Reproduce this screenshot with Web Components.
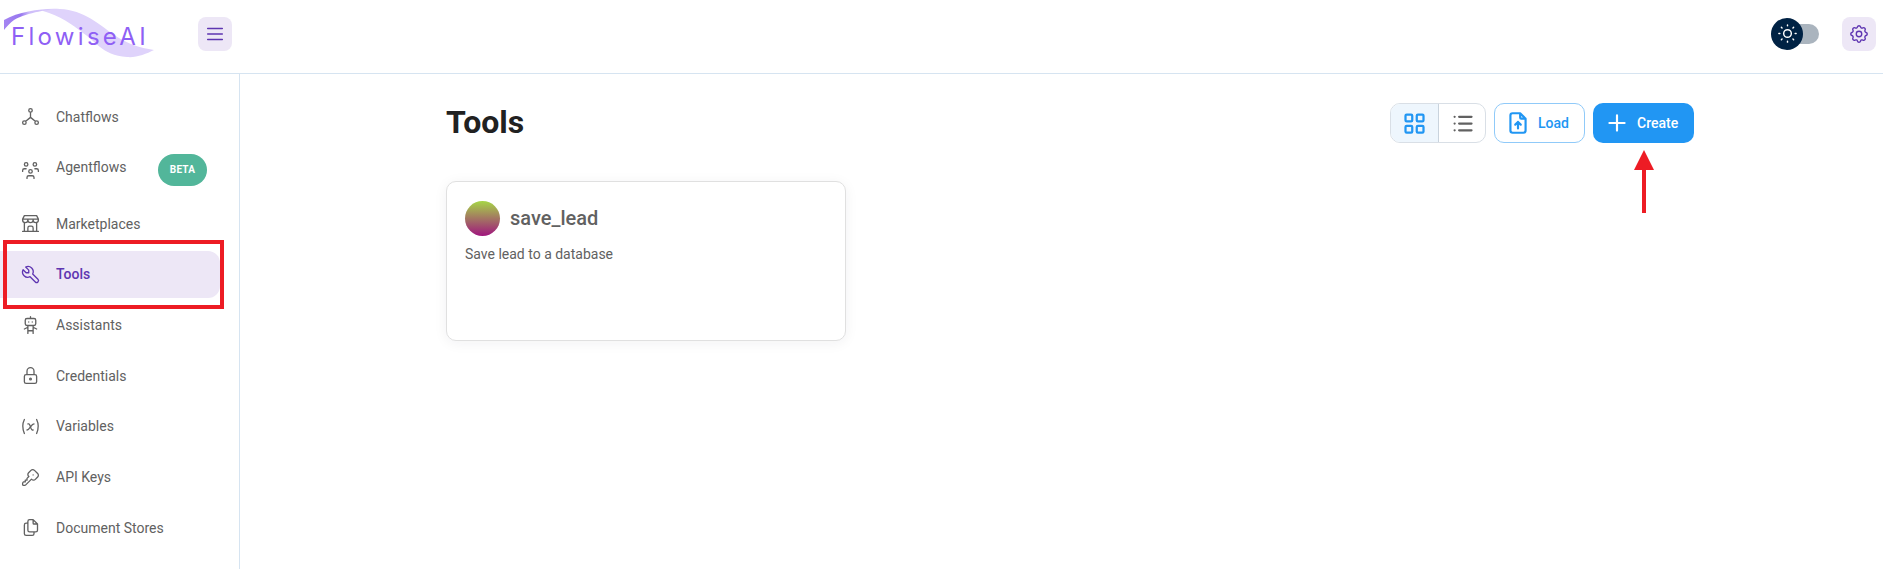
<!DOCTYPE html>
<html lang="en"><head><meta charset="utf-8"><title>Tools</title>
<style>
html,body{margin:0;padding:0;height:569px;overflow:hidden;background:#fff;font-family:Roboto,"Liberation Sans",sans-serif}
</style></head>
<body>
<fw-app></fw-app>
<script>
const ICONS={
hierarchy:'M12 5m-2 0a2 2 0 1 0 4 0a2 2 0 1 0 -4 0M5 19m-2 0a2 2 0 1 0 4 0a2 2 0 1 0 -4 0M19 19m-2 0a2 2 0 1 0 4 0a2 2 0 1 0 -4 0M6.5 17.5l5.5 -4.5l5.5 4.5M12 7l0 6',
users:'M10 13a2 2 0 1 0 4 0a2 2 0 0 0 -4 0M8 21v-1a2 2 0 0 1 2 -2h4a2 2 0 0 1 2 2v1M15 5a2 2 0 1 0 4 0a2 2 0 0 0 -4 0M17 10h2a2 2 0 0 1 2 2v1M5 5a2 2 0 1 0 4 0a2 2 0 0 0 -4 0M3 13v-1a2 2 0 0 1 2 -2h2',
store:'M3 21l18 0M3 7v1a3 3 0 0 0 6 0v-1m0 1a3 3 0 0 0 6 0v-1m0 1a3 3 0 0 0 6 0v-1h-18l2 -4h14l2 4M5 21l0 -10.15M19 21l0 -10.15M9 21v-4a2 2 0 0 1 2 -2h2a2 2 0 0 1 2 2v4',
tool:'M7 10h3v-3l-3.5 -3.5a6 6 0 0 1 8 8l6 6a2 2 0 0 1 -3 3l-6 -6a6 6 0 0 1 -8 -8l3.5 3.5',
robot:'M6 4m0 2a2 2 0 0 1 2 -2h8a2 2 0 0 1 2 2v4a2 2 0 0 1 -2 2h-8a2 2 0 0 1 -2 -2zM12 2v2M9 12v9M15 12v9M5 16l4 -2M15 14l4 2M9 18h6M10 8v.01M14 8v.01',
lock:'M5 13a2 2 0 0 1 2 -2h10a2 2 0 0 1 2 2v6a2 2 0 0 1 -2 2h-10a2 2 0 0 1 -2 -2v-6zM11 16a1 1 0 1 0 2 0a1 1 0 0 0 -2 0M8 11v-4a4 4 0 1 1 8 0v4',
variable:'M5 4c-2.5 5 -2.5 10 0 16m14 -16c2.5 5 2.5 10 0 16m-10 -11h1c1 0 1 1 2.016 3.527c.984 2.473 .984 3.473 1.984 3.473h1M8 16c1.5 0 3 -2 4 -3.5s2.5 -3.5 4 -3.5',
key:'M16.555 3.843l3.602 3.602a2.877 2.877 0 0 1 0 4.069l-2.643 2.643a2.877 2.877 0 0 1 -4.069 0l-.301 -.301l-6.558 6.558a2 2 0 0 1 -1.239 .578l-.175 .008h-1.172a1 1 0 0 1 -.993 -.883l-.007 -.117v-1.172a2 2 0 0 1 .467 -1.284l.119 -.13l.414 -.414h2v-2h2v-2l2.144 -2.144l-.301 -.301a2.877 2.877 0 0 1 0 -4.069l2.643 -2.643a2.877 2.877 0 0 1 4.069 0zM15 9h.01',
files:'M15 3v4a1 1 0 0 0 1 1h4M18 17h-7a2 2 0 0 1 -2 -2v-10a2 2 0 0 1 2 -2h4l5 5v7a2 2 0 0 1 -2 2zM16 17v2a2 2 0 0 1 -2 2h-7a2 2 0 0 1 -2 -2v-10a2 2 0 0 1 2 -2h2',
menu:'M4 6l16 0M4 12l16 0M4 18l16 0',
sun:'M12 12m-4 0a4 4 0 1 0 8 0a4 4 0 1 0 -8 0M3 12h1m8 -9v1m8 8h1m-9 8v1m-6.4 -15.4l.7 .7m12.1 -.7l-.7 .7m0 11.4l.7 .7m-12.1 -.7l-.7 .7',
settings:'M10.325 4.317c.426 -1.756 2.924 -1.756 3.35 0a1.724 1.724 0 0 0 2.573 1.066c1.543 -.94 3.31 .826 2.37 2.37a1.724 1.724 0 0 0 1.065 2.572c1.756 .426 1.756 2.924 0 3.35a1.724 1.724 0 0 0 -1.066 2.573c.94 1.543 -.826 3.31 -2.37 2.37a1.724 1.724 0 0 0 -2.572 1.065c-.426 1.756 -2.924 1.756 -3.35 0a1.724 1.724 0 0 0 -2.573 -1.066c-1.543 .94 -3.31 -.826 -2.37 -2.37a1.724 1.724 0 0 0 -1.065 -2.572c-1.756 -.426 -1.756 -2.924 0 -3.35a1.724 1.724 0 0 0 1.066 -2.573c-.94 -1.543 .826 -3.31 2.37 -2.37c1 .608 2.296 .07 2.572 -1.065zM9 12a3 3 0 1 0 6 0a3 3 0 0 0 -6 0',
grid:'M4 4m0 1a1 1 0 0 1 1 -1h4a1 1 0 0 1 1 1v4a1 1 0 0 1 -1 1h-4a1 1 0 0 1 -1 -1zM14 4m0 1a1 1 0 0 1 1 -1h4a1 1 0 0 1 1 1v4a1 1 0 0 1 -1 1h-4a1 1 0 0 1 -1 -1zM4 14m0 1a1 1 0 0 1 1 -1h4a1 1 0 0 1 1 1v4a1 1 0 0 1 -1 1h-4a1 1 0 0 1 -1 -1zM14 14m0 1a1 1 0 0 1 1 -1h4a1 1 0 0 1 1 1v4a1 1 0 0 1 -1 1h-4a1 1 0 0 1 -1 -1z',
list:'M9 6l11 0M9 12l11 0M9 18l11 0M5 6l0 .01M5 12l0 .01M5 18l0 .01',
upload:'M14 3v4a1 1 0 0 0 1 1h4M17 21h-10a2 2 0 0 1 -2 -2v-14a2 2 0 0 1 2 -2h7l5 5v11a2 2 0 0 1 -2 2zM12 11v6M9.500 13.500l2.500 -2.500l2.500 2.500',
plus:'M12 5l0 14M5 12l14 0'
};
function def(name,html,extra){
  const t=document.createElement('template');t.innerHTML=html;
  customElements.define(name,class extends HTMLElement{
    connectedCallback(){ if(this.shadowRoot)return; this.attachShadow({mode:'open'}).appendChild(t.content.cloneNode(true)); if(extra)extra(this); }
  });
}
def('fw-icon','<style>:host{display:inline-flex;flex:none;width:var(--s,24px);height:var(--s,24px)}svg{width:100%;height:100%;fill:none;stroke:currentColor;stroke-width:var(--w,1.5);stroke-linecap:round;stroke-linejoin:round}</style><svg viewBox="0 0 24 24"><path></path></svg>',
  el=>el.shadowRoot.querySelector('path').setAttribute('d',ICONS[el.getAttribute('name')]));
def('fw-logo',`<style>:host{display:block;position:relative;width:150px;height:52px;flex:none}
svg{position:absolute;left:0;top:0;width:150px;height:52px}
span{position:absolute;left:7px;top:15px;font:400 24px/28px Inter,"Noto Sans",sans-serif;letter-spacing:3.300px;color:#8f5ff5;white-space:nowrap}</style>
<svg viewBox="4 8 150 52"><defs>
<linearGradient id="l" x1="0" x2="1" y1="0" y2="0"><stop offset="0" stop-color="#a585f2"/><stop offset=".3" stop-color="#9878ef"/><stop offset=".45" stop-color="#cdbcf9"/><stop offset="1" stop-color="#dccffb"/></linearGradient></defs>
<path d="M43 10C48 9 54 9 60 9C84 10 100 25 113 34C125 43 140 48 154 50C146 54 136 58 127 57C114 56 106 52 100 47C94 42 90 38 83 33C72 24 60 16 43 11Z" fill="#dfd3fb"/>
<path d="M4 20C20 11 44 8 60 9C50 9.500 28 12 14 20C10 23 7 26 4 30Z" fill="url(#l)"/></svg><span>FlowiseAI</span>`);
def('fw-icon-btn',`<style>:host{display:flex;align-items:center;justify-content:center;width:34px;height:34px;border-radius:8px;background:#ede7f6;color:#5e35b1;flex:none;--s:22px;--w:1.5}</style><slot></slot>`);
def('fw-theme-switch',`<style>:host{display:block;position:relative;width:48px;height:32px;flex:none}
.t{position:absolute;left:14px;top:6px;width:34px;height:20px;border-radius:10px;background:#aab4be}
.k{position:absolute;left:0;top:0;width:32px;height:32px;border-radius:50%;background:#002244;color:#fff;display:flex;align-items:center;justify-content:center;--s:23px}</style>
<div class="t"></div><div class="k"><fw-icon name="sun"></fw-icon></div>`);
def('fw-header',`<style>:host{display:flex;align-items:center;height:67px;padding:0 7px 6px 4px;border-bottom:1px solid #d6e4f1;flex:none}
.sp{flex:1}fw-icon-btn.m{margin-left:44px}fw-theme-switch{margin-right:23px}</style>
<fw-logo></fw-logo><fw-icon-btn class="m"><fw-icon name="menu"></fw-icon></fw-icon-btn><div class="sp"></div><fw-theme-switch></fw-theme-switch><fw-icon-btn><fw-icon name="settings"></fw-icon></fw-icon-btn>`);
def('fw-nav-item',`<style>:host{display:flex;align-items:center;height:47px;margin:0 19px 3.700px 0;padding-left:19.500px;border-radius:0 12px 12px 0;color:#616161;font-size:14px;line-height:20px;box-sizing:border-box;--s:21px;--w:1.5}
:host([active]){background:#ede7f6;color:#5e35b1;font-weight:500}
:host([tall]){height:52.800px}
:host([tall]) .l{margin-bottom:7px}
.l{margin-left:15.500px;flex:1;white-space:nowrap}</style><slot name="i"></slot><span class="l"><slot></slot></span><slot name="e"></slot>`);
def('fw-badge',`<style>:host{display:inline-flex;align-items:center;justify-content:center;width:49px;height:32px;border-radius:16px;background:#52b69a;color:#fff;font-size:10px;font-weight:700;letter-spacing:.2px;margin-right:13px;flex:none}</style><slot></slot>`);
def('fw-sidebar',`<style>:host{display:block;width:239px;flex:none;border-right:1px solid #d6e4f1;padding-top:19px}</style><slot></slot>`);
def('fw-toggle',`<style>:host{display:inline-flex;height:40px;box-sizing:border-box;border:1px solid #d9dfe6;border-radius:10px;overflow:hidden;flex:none}
.a,.b{display:flex;align-items:center;justify-content:center;--s:27px;--w:2}
.a{width:47px;background:#eef6fd;color:#2196f3;border-right:1px solid #c9d3dd}.b{width:46px;color:#616161}</style>
<div class="a"><fw-icon name="grid"></fw-icon></div><div class="b"><fw-icon name="list"></fw-icon></div>`);
def('fw-button',`<style>:host{display:inline-flex;align-items:center;height:40px;box-sizing:border-box;border-radius:10px;font-size:14px;font-weight:500;flex:none;--s:26px;--w:2}
:host([variant=o]){width:91px;padding-left:10px;border:1px solid #90caf9;color:#2196f3}
:host([variant=c]){width:101px;padding-left:11px;background:#2196f3;color:#fff}
span{margin-left:7px}</style><slot name="i"></slot><span><slot></slot></span>`);
def('fw-tool-card',`<style>:host{display:block;width:400px;height:160px;box-sizing:border-box;border:1px solid #e0e0e0;border-radius:10px;background:#fff;box-shadow:0 2px 14px rgba(32,40,45,.06);padding:18px 18px;color:#616161}
.h{display:flex;align-items:center;gap:10px;height:36px}
.a{width:35px;height:35px;border-radius:50%;background:linear-gradient(#a6d646,#a0157e)}
.t{font-size:20px;font-weight:500;line-height:24px}
.d{font-size:14px;line-height:20px;margin-top:8px}</style>
<div class="h"><div class="a"></div><div class="t"><slot name="title"></slot></div></div><div class="d"><slot></slot></div>`);
def('fw-main',`<style>:host{display:block;flex:1;min-width:0;padding:29px 189px 0 206px}
.r{display:flex;align-items:center;height:40px;gap:8px}
h1{flex:1;margin:-2px 0 0;font-size:32px;font-weight:700;color:#212121;line-height:40px;letter-spacing:0}
.c{margin-top:38px}</style>
<div class="r"><h1>Tools</h1><fw-toggle></fw-toggle><fw-button variant="o"><fw-icon slot="i" name="upload"></fw-icon>Load</fw-button><fw-button variant="c"><fw-icon slot="i" name="plus"></fw-icon>Create</fw-button></div>
<div class="c"><fw-tool-card><span slot="title">save_lead</span>Save lead to a database</fw-tool-card></div>`);
def('fw-annotations',`<style>:host{display:block}
.box{position:absolute;left:3px;top:240px;width:221px;height:69px;box-sizing:border-box;border:4px solid #ed1c24}
svg{position:absolute;left:1634px;top:150px;width:20px;height:64px}</style>
<div class="box"></div><svg viewBox="0 0 20 64"><path d="M10 0L20 20H12V63H8V20H0Z" fill="#ed1c24"/></svg>`);
def('fw-app',`<style>:host{display:flex;flex-direction:column;height:569px;position:relative;overflow:hidden}.b{display:flex;flex:1;min-height:0}</style>
<fw-header></fw-header>
<div class="b"><fw-sidebar>
<fw-nav-item><fw-icon slot="i" name="hierarchy"></fw-icon>Chatflows</fw-nav-item>
<fw-nav-item tall><fw-icon slot="i" name="users"></fw-icon>Agentflows<fw-badge slot="e">BETA</fw-badge></fw-nav-item>
<fw-nav-item><fw-icon slot="i" name="store"></fw-icon>Marketplaces</fw-nav-item>
<fw-nav-item active><fw-icon slot="i" name="tool"></fw-icon>Tools</fw-nav-item>
<fw-nav-item><fw-icon slot="i" name="robot"></fw-icon>Assistants</fw-nav-item>
<fw-nav-item><fw-icon slot="i" name="lock"></fw-icon>Credentials</fw-nav-item>
<fw-nav-item><fw-icon slot="i" name="variable"></fw-icon>Variables</fw-nav-item>
<fw-nav-item><fw-icon slot="i" name="key"></fw-icon>API Keys</fw-nav-item>
<fw-nav-item><fw-icon slot="i" name="files"></fw-icon>Document Stores</fw-nav-item>
</fw-sidebar><fw-main></fw-main></div>
<fw-annotations></fw-annotations>`);
</script>
</body></html>
